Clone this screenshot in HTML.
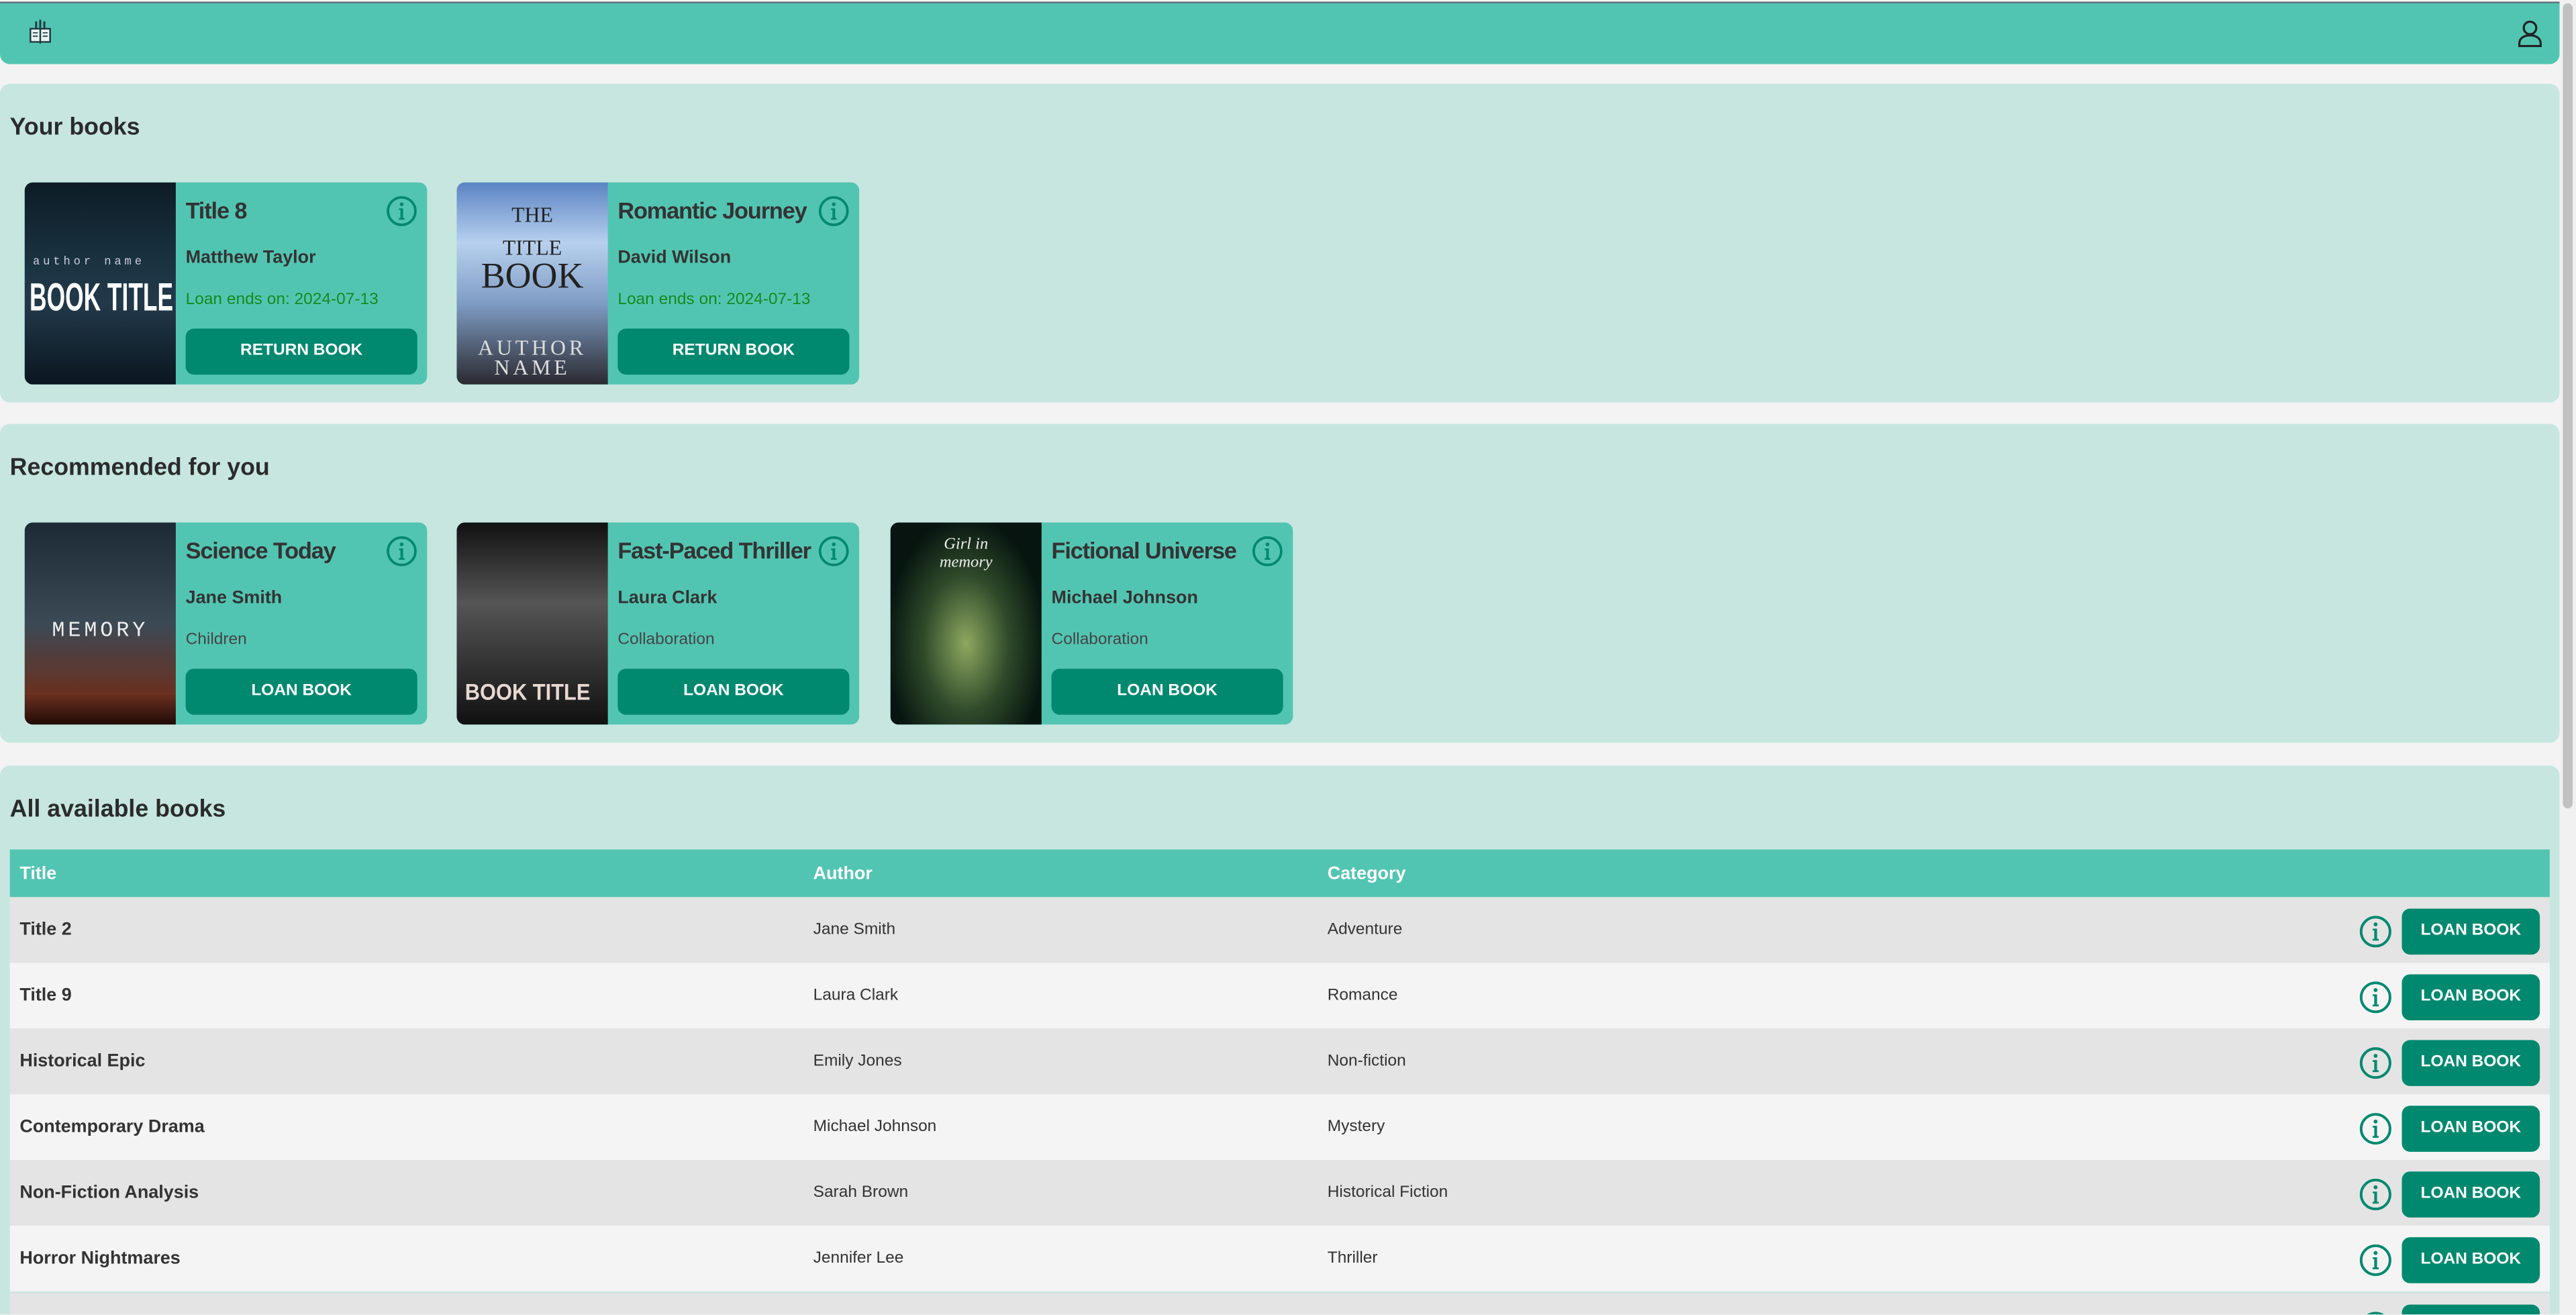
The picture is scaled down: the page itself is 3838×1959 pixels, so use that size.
<!DOCTYPE html>
<html><head><meta charset="utf-8"><style>
html,body{margin:0;padding:0;width:3838px;height:1959px;overflow:hidden;background:#f3f3f3;font-family:"Liberation Sans",Arial,sans-serif}
#w{position:absolute;left:0;top:0;width:1568px;height:800px;transform:scale(2.4477);transform-origin:0 0;background:#f3f3f3;overflow:hidden}
.hdr{position:absolute;left:0;top:1px;width:1558px;height:37px;background:#52c5b2;border-radius:0 0 6px 6px;border-top:1px solid #5a6b78}
.sec{position:absolute;left:0;width:1558px;background:#c7e6e0;border-radius:6px}
.sec h2{position:absolute;left:6px;margin:0;font-size:14.6px;font-weight:bold;color:#2b2b2b}
.card{position:absolute;top:60px;width:245px;height:123px;background:#52c5b2;border-radius:5px;overflow:hidden}
.cov{position:absolute;left:0;top:0;width:92px;height:123px;overflow:hidden}
.ct{position:absolute;left:98px;top:9px;font-size:14px;font-weight:bold;letter-spacing:-0.45px;color:#333;white-space:nowrap}
.ca{position:absolute;left:98px;top:40px;font-size:11px;font-weight:bold;color:#333}
.cc{position:absolute;left:98px;top:66px;font-size:10px;color:#444}
.cc.g{color:#168a1e}
.btn{background:#00896f;color:#fff;font-weight:bold;font-size:10px;text-align:center;border-radius:5px}
.cb{position:absolute;left:98px;top:89px;width:141px;height:28px;line-height:28px}
.ic{position:absolute;width:19px;height:19px}
.tbl{position:absolute;left:6px;top:517px;width:1546px}
.th{height:29px;background:#52c5b2;color:#fff;font-weight:bold;font-size:11px;position:relative}
.row{height:40px;position:relative;font-size:10px;color:#333}
.row:nth-child(odd){background:#e4e4e4}.row:nth-child(even){background:#f4f4f4}
.c1,.c2,.c3{position:absolute;top:51%;transform:translateY(-50%)}
.c1{left:6px}.c2{left:489px}.c3{left:802px}
.row .c1{font-weight:bold;font-size:11px}
.rb{position:absolute;left:1456px;top:7px;width:84px;height:28px;line-height:28px}
.ri{position:absolute;left:1430px;top:11px;width:20px;height:20px}
.sb{position:absolute;left:1558px;top:0;width:10px;height:800px;background:#f1f1f1}
.sb div{position:absolute;left:2px;top:2px;width:6px;height:490px;background:#c1c1c1;border-radius:3px}
</style></head><body><div id="w">
<svg width="0" height="0" style="position:absolute"><defs><symbol id="info" viewBox="0 0 20 20"><circle cx="10" cy="10" r="8.8" fill="none" stroke="#00896f" stroke-width="1.6"/><circle cx="10" cy="5.6" r="1.2" fill="#00896f"/><path d="M8.3 8.2h2.6v6.2h1v1.1H8.2v-1.1h1V9.3H8.3z" fill="#00896f"/></symbol></defs></svg>
<div class="hdr">
<svg style="position:absolute;left:17px;top:10px" width="15" height="16" viewBox="0 0 15 16"><path d="M1 5h13v9H8l-.5 1-.5-1H1z" fill="#1e3b40"/><path d="M2 6h5v7H2zM8 6h5v7H8z" fill="#e8f3f1"/><path d="M3 8h3M3 10h3M9 8h3M9 10h3" stroke="#1e3b40" stroke-width=".7"/><path d="M5 1v4M7.5 0v5M10 1v4" stroke="#1e3b40" stroke-width="1.2"/></svg>
<svg style="position:absolute;left:1532px;top:10px" width="16" height="17" viewBox="0 0 16 17"><circle cx="8" cy="5" r="3.8" fill="none" stroke="#222" stroke-width="1.3"/><path d="M1.5 16v-1.5c0-3 2.5-5 6.5-5s6.5 2 6.5 5V16z" fill="none" stroke="#222" stroke-width="1.3"/></svg>
</div>
<div class="sec" style="top:51px;height:194px"><h2 style="top:19px">Your books</h2>
<div class="card" style="left:15px"><div class="cov" style="background:linear-gradient(#0d1c26,#1a3341 40%,#22394a 60%,#0a1620)"><div style="position:absolute;top:45px;left:5px;color:#ccd;font:7px 'Liberation Mono';letter-spacing:2px">author name</div><div style="position:absolute;top:58px;left:3px;color:#fff;font:bold 19px 'Liberation Sans';white-space:nowrap;transform:scale(0.76,1.25);transform-origin:0 0">BOOK TITLE</div></div>
<div class="ct">Title 8</div><svg class="ic" style="left:220px;top:8px"><use href="#info"/></svg>
<div class="ca">Matthew Taylor</div><div class="cc g">Loan ends on: 2024-07-13</div><div class="btn cb">RETURN BOOK</div></div>
<div class="card" style="left:278px"><div class="cov" style="background:linear-gradient(#5c84c4,#b7d0ee 30%,#7f9cc4 60%,#2a2a30)"><div style="position:absolute;top:8px;width:92px;text-align:center;color:#222;font:22px 'Liberation Serif';line-height:17px"><span style="font-size:13px">THE<br>TITLE</span><br>BOOK</div><div style="position:absolute;top:95px;width:92px;text-align:center;color:#ddd;font:13px 'Liberation Serif';line-height:12px;letter-spacing:2px">AUTHOR<br>NAME</div></div>
<div class="ct">Romantic Journey</div><svg class="ic" style="left:220px;top:8px"><use href="#info"/></svg>
<div class="ca">David Wilson</div><div class="cc g">Loan ends on: 2024-07-13</div><div class="btn cb">RETURN BOOK</div></div>
</div>
<div class="sec" style="top:258px;height:194px"><h2 style="top:19px">Recommended for you</h2>
<div class="card" style="left:15px"><div class="cov" style="background:linear-gradient(#1c2a35,#3b4a55 50%,#6a3020 85%,#200a05)"><div style="position:absolute;top:58px;width:92px;text-align:center;color:#eee;font:13px 'Liberation Mono';letter-spacing:2px">MEMORY</div></div>
<div class="ct">Science Today</div><svg class="ic" style="left:220px;top:8px"><use href="#info"/></svg>
<div class="ca">Jane Smith</div><div class="cc">Children</div><div class="btn cb">LOAN BOOK</div></div>
<div class="card" style="left:278px"><div class="cov" style="background:linear-gradient(#111,#555 40%,#333 70%,#111)"><div style="position:absolute;top:95px;left:5px;color:#e8d8d0;font:bold 14px 'Liberation Sans';white-space:nowrap;transform:scaleX(0.9);transform-origin:0 0">BOOK TITLE</div></div>
<div class="ct">Fast-Paced Thriller</div><svg class="ic" style="left:220px;top:8px"><use href="#info"/></svg>
<div class="ca">Laura Clark</div><div class="cc">Collaboration</div><div class="btn cb">LOAN BOOK</div></div>
<div class="card" style="left:542px"><div class="cov" style="background:radial-gradient(ellipse at 50% 60%,#8ea860,#2f4a2a 40%,#071410 75%)"><div style="position:absolute;top:8px;width:92px;text-align:center;color:#eee;font:italic 10px 'Liberation Serif'">Girl in<br>memory</div></div>
<div class="ct">Fictional Universe</div><svg class="ic" style="left:220px;top:8px"><use href="#info"/></svg>
<div class="ca">Michael Johnson</div><div class="cc">Collaboration</div><div class="btn cb">LOAN BOOK</div></div>
</div>
<div class="sec" style="top:466px;height:334px;border-radius:6px 6px 0 0"><h2 style="top:19px">All available books</h2></div>
<div class="tbl">
<div class="th"><span class="c1">Title</span><span class="c2">Author</span><span class="c3">Category</span></div>
<div>
<div class="row"><span class="c1">Title 2</span><span class="c2">Jane Smith</span><span class="c3">Adventure</span><svg class="ri"><use href="#info"/></svg><div class="btn rb">LOAN BOOK</div></div>
<div class="row"><span class="c1">Title 9</span><span class="c2">Laura Clark</span><span class="c3">Romance</span><svg class="ri"><use href="#info"/></svg><div class="btn rb">LOAN BOOK</div></div>
<div class="row"><span class="c1">Historical Epic</span><span class="c2">Emily Jones</span><span class="c3">Non-fiction</span><svg class="ri"><use href="#info"/></svg><div class="btn rb">LOAN BOOK</div></div>
<div class="row"><span class="c1">Contemporary Drama</span><span class="c2">Michael Johnson</span><span class="c3">Mystery</span><svg class="ri"><use href="#info"/></svg><div class="btn rb">LOAN BOOK</div></div>
<div class="row"><span class="c1">Non-Fiction Analysis</span><span class="c2">Sarah Brown</span><span class="c3">Historical Fiction</span><svg class="ri"><use href="#info"/></svg><div class="btn rb">LOAN BOOK</div></div>
<div class="row"><span class="c1">Horror Nightmares</span><span class="c2">Jennifer Lee</span><span class="c3">Thriller</span><svg class="ri"><use href="#info"/></svg><div class="btn rb">LOAN BOOK</div></div>
</div></div>
<div style="position:absolute;left:6px;top:787px;width:1546px;height:13px;background:#e4e4e4"><svg style="position:absolute;left:1430px;top:11px" width="20" height="20"><use href="#info"/></svg><div class="btn" style="position:absolute;left:1456px;top:7px;width:84px;height:28px"></div></div>
<div class="sb"><div></div></div>
</div></body></html>
